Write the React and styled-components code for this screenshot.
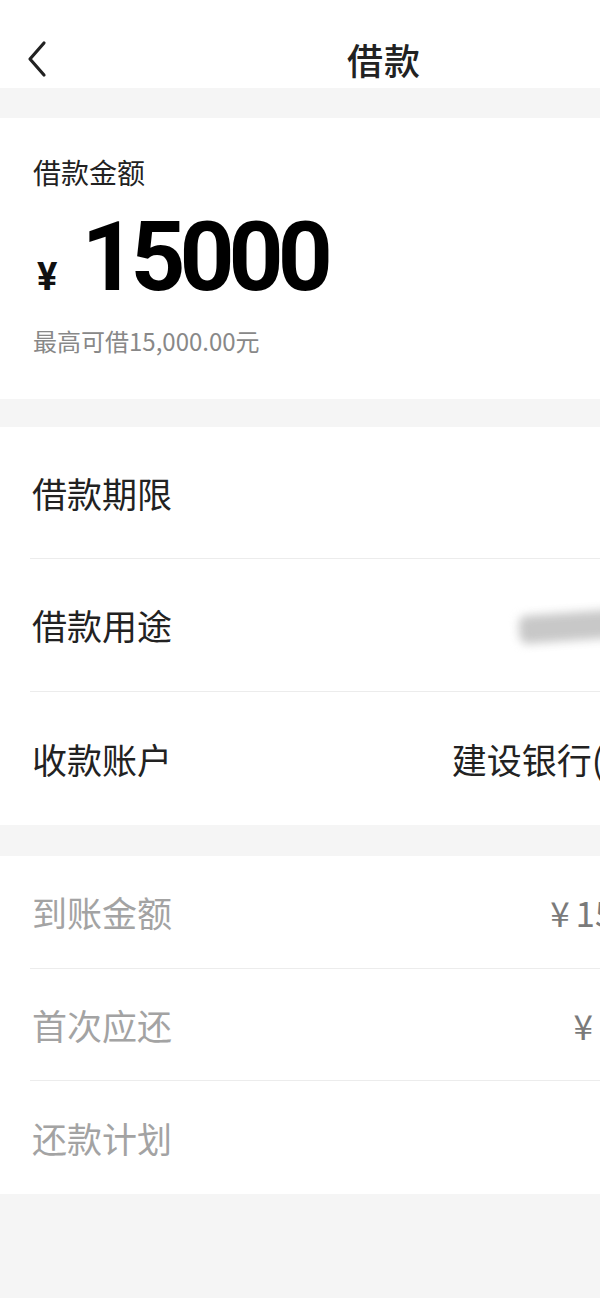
import React from 'react';
import styled, { createGlobalStyle } from 'styled-components';

const GlobalStyle = createGlobalStyle`
  html, body {
    margin: 0;
    padding: 0;
    background: #f5f5f5;
    overflow: hidden;
  }
  body {
    font-family: "Noto Sans CJK SC", "Noto Sans", sans-serif;
    color: #222;
  }
`;

const Page = styled.div`
  width: 768px;
  min-height: 1298px;
  background: #f5f5f5;
  display: flex;
  flex-direction: column;
`;

const NavBar = styled.div`
  height: 88px;
  background: #fff;
  position: relative;
  display: flex;
  align-items: center;
  justify-content: center;
`;

const BackButton = styled.div`
  position: absolute;
  left: 26px;
  top: 40px;
  width: 22px;
  height: 38px;
`;

const Title = styled.div`
  font-size: 36px;
  font-weight: 500;
  line-height: 40px;
  margin-top: 30px;
  letter-spacing: 1px;
`;

const Card = styled.div`
  background: #fff;
  margin-top: ${(p) => p.gap}px;
`;

const AmountCard = styled(Card)`
  display: flex;
  flex-direction: column;
  padding: 34px 33px 42px;
`;

const AmountLabel = styled.div`
  font-size: 28px;
  line-height: 40px;
`;

const AmountRow = styled.div`
  display: flex;
  align-items: baseline;
  margin-top: 17px;
  height: 96px;
`;

const Yen = styled.span`
  font-family: Roboto, "Noto Sans CJK SC", sans-serif;
  font-size: 38px;
  font-weight: 700;
  line-height: 1;
  margin-left: 4px;
  margin-right: 24px;
  color: #111;
`;

const BigNumber = styled.span`
  font-family: Roboto, sans-serif;
  font-size: 96px;
  font-weight: 700;
  line-height: 1;
  letter-spacing: -6px;
  color: #000;
`;

const Hint = styled.div`
  margin-top: 20px;
  font-size: 24px;
  line-height: 32px;
  color: #888;
`;

const Row = styled.div`
  margin-left: 30px;
  padding-right: 33px;
  height: ${(p) => p.h}px;
  display: flex;
  align-items: center;
  justify-content: space-between;
  border-bottom: ${(p) => (p.last ? 'none' : '1px solid #ececec')};
  box-sizing: border-box;
`;

const Label = styled.div`
  font-size: 35px;
  line-height: 44px;
  margin-left: 2px;
  color: ${(p) => (p.muted ? '#a3a3a3' : '#222')};
`;

const Value = styled.div`
  display: flex;
  align-items: center;
  gap: 12px;
  margin-right: ${(p) => p.offset || 0}px;
  font-size: 35px;
  line-height: 44px;
  white-space: nowrap;
  color: ${(p) => (p.muted ? '#7a7a7a' : '#222')};
`;

const Currency = styled.span`
  margin-right: 6px;
`;

const Smudge = styled.span`
  display: block;
  width: 150px;
  height: 28px;
  margin-right: 40px;
  background: #c8c8c8;
  border-radius: 8px;
  filter: blur(5px);
  transform: rotate(-4deg);
`;

const Chevron = ({ color = '#bbb' }) => (
  <svg width="14" height="24" viewBox="0 0 14 24">
    <path d="M2 2 L12 12 L2 22" fill="none" stroke={color} strokeWidth="2.4" strokeLinecap="round" strokeLinejoin="round" />
  </svg>
);

const Back = () => (
  <BackButton>
    <svg width="22" height="38" viewBox="0 0 22 38">
      <path d="M18 3 L4 19 L18 35" fill="none" stroke="#222" strokeWidth="3.2" strokeLinecap="round" strokeLinejoin="round" />
    </svg>
  </BackButton>
);

const App = () => (
  <Page>
    <GlobalStyle />
    <NavBar>
      <Back />
      <Title>借款</Title>
    </NavBar>

    <AmountCard gap={30}>
      <AmountLabel>借款金额</AmountLabel>
      <AmountRow>
        <Yen>¥</Yen>
        <BigNumber>15000</BigNumber>
      </AmountRow>
      <Hint>最高可借15,000.00元</Hint>
    </AmountCard>

    <Card gap={28}>
      <Row h={132}>
        <Label>借款期限</Label>
        <Value>
          <Chevron />
        </Value>
      </Row>
      <Row h={133}>
        <Label>借款用途</Label>
        <Value>
          <Smudge />
          <Chevron />
        </Value>
      </Row>
      <Row h={133} last>
        <Label>收款账户</Label>
        <Value offset={16}>
          建设银行(6217)
          <Chevron />
        </Value>
      </Row>
    </Card>

    <Card gap={31}>
      <Row h={113}>
        <Label muted>到账金额</Label>
        <Value muted offset={4}>
          <span><Currency>¥</Currency>15,000.00</span>
        </Value>
      </Row>
      <Row h={112}>
        <Label muted>首次应还</Label>
        <Value muted>
          <span><Currency>¥</Currency>1,375.00</span>
        </Value>
      </Row>
      <Row h={113} last>
        <Label muted>还款计划</Label>
        <Value muted>
          <Chevron />
        </Value>
      </Row>
    </Card>
  </Page>
);

export default App;
